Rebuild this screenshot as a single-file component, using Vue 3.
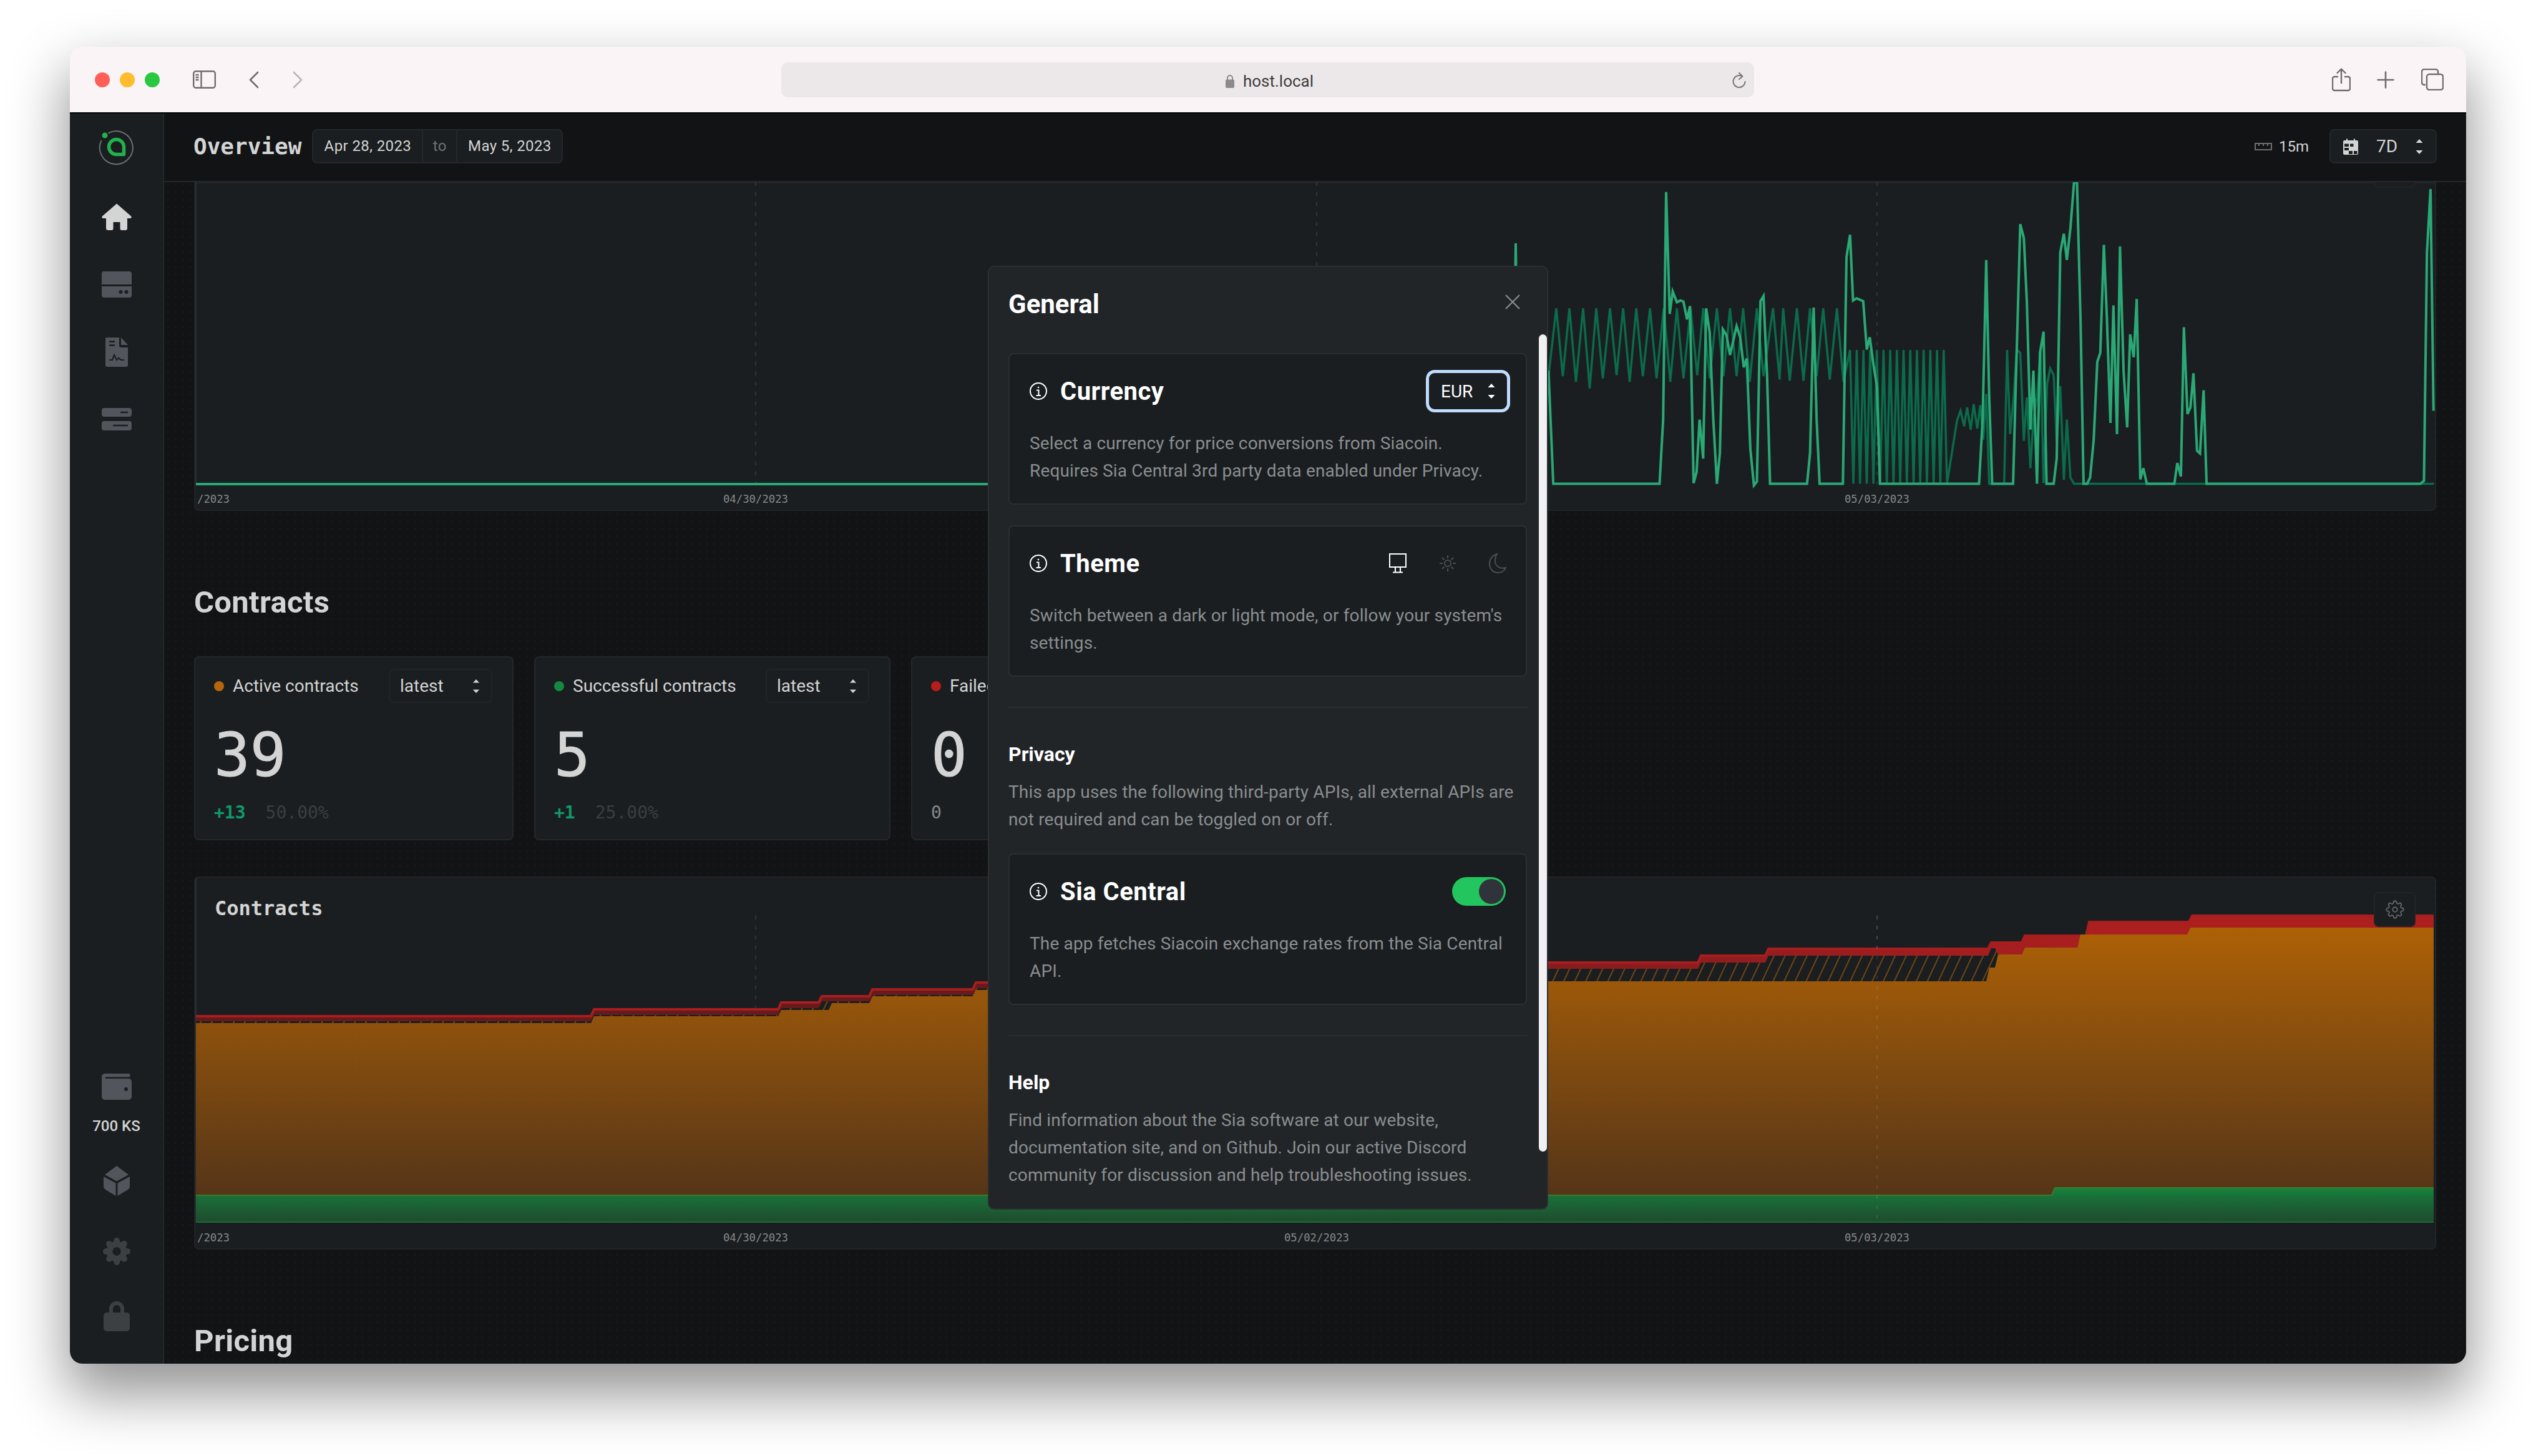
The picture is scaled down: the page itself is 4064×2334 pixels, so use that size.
<template>
  <div class="page">
    <div class="window">
      <div class="titlebar">
        <div class="lights">
          <span class="light red"></span>
          <span class="light amber"></span>
          <span class="light green"></span>
        </div>
        <svg class="tb-sidebar" viewBox="0 0 37 29" fill="none" stroke="#6f6b6d" stroke-width="2.4">
          <rect x="1.2" y="1.2" width="34.6" height="26.6" rx="3.5" />
          <path d="M13.5 1.2v26.6M4.5 7h5M4.5 11h5M4.5 15h5" />
        </svg>
        <svg class="tb-back" viewBox="0 0 16 28" fill="none" stroke="#6f6b6d" stroke-width="2.6" stroke-linecap="round" stroke-linejoin="round"><path d="M14 2 2 14l12 12" /></svg>
        <svg class="tb-forward" viewBox="0 0 16 28" fill="none" stroke="#b9b5b7" stroke-width="2.6" stroke-linecap="round" stroke-linejoin="round"><path d="m2 2 12 12L2 26" /></svg>
        <div class="addressbar">
          <svg class="lock-small" viewBox="0 0 14 23" fill="#8c898b"><path d="M2 10V7a5 5 0 0 1 10 0v3h-2V7a3 3 0 0 0-6 0v3z" /><rect y="9.5" width="14" height="13.5" rx="2" /></svg>
          <span>host.local</span>
          <svg class="reload" viewBox="0 0 24 26" fill="none" stroke="#7a7678" stroke-width="2" stroke-linecap="round"><path d="M17 6.5A9.5 9.5 0 1 0 21.5 15" /><path d="m12 1 5.5 5.5L12 11" stroke-linejoin="round" /></svg>
        </div>
        <div class="tb-actions">
          <svg class="tb-share" viewBox="0 0 30 38" fill="none" stroke="#6f6b6d" stroke-width="2.4" stroke-linecap="round" stroke-linejoin="round"><path d="M9 14H4a3 3 0 0 0-3 3v16a3 3 0 0 0 3 3h22a3 3 0 0 0 3-3V17a3 3 0 0 0-3-3h-5M15 24V2M8.5 8 15 1.5 21.5 8" /></svg>
          <svg class="tb-plus" viewBox="0 0 28 28" fill="none" stroke="#6f6b6d" stroke-width="2.6" stroke-linecap="round"><path d="M14 1.5v25M1.5 14h25" /></svg>
          <svg class="tb-tabs" viewBox="0 0 36 35" fill="none" stroke="#6f6b6d" stroke-width="2.4"><path d="M7 26H5a4 4 0 0 1-4-4V5a4 4 0 0 1 4-4h18a4 4 0 0 1 4 4v3" /><rect x="9" y="9" width="26" height="25" rx="4" /></svg>
        </div>
      </div>

      <div class="app">
        <aside class="sidebar">
          <div class="nav-logo">
            <svg viewBox="0 0 60 60" width="60" height="60" fill="none">
              <path d="M16.5 7.5A26.5 26.5 0 1 1 5.5 19" stroke="#6c7072" stroke-width="2" />
              <circle cx="11" cy="11" r="4.5" fill="#22b14c" />
              <path d="M41.5 41.5H29.5a12 12 0 1 1 12-12Z" stroke="#22b14c" stroke-width="5.5" stroke-linejoin="round" />
            </svg>
          </div>
          <div class="nav-item">
            <svg width="48" height="44" viewBox="0 0 48 44" fill="#d4d4d4"><path d="M24 0.5 47 20.5Q49 24 45 24H41V40Q41 43 38 43H32Q29.500 43 29.500 40V30H18.500V40Q18.500 43 16 43H10Q7 43 7 40V24H3Q-1 24 1 20.500Z" /></svg>
          </div>
          <div class="nav-item">
            <svg width="48" height="42" viewBox="0 0 48 42" fill="#52565c"><path d="M4 0H44A4 4 0 0 1 48 4V21H0V4A4 4 0 0 1 4 0ZM0 24H48V38A4 4 0 0 1 44 42H4A4 4 0 0 1 0 38Z" /><circle cx="30.500" cy="33" r="3" fill="#1a1e20" /><circle cx="39.500" cy="33" r="3" fill="#1a1e20" /></svg>
          </div>
          <div class="nav-item">
            <svg width="36" height="47" viewBox="0 0 36 47" fill="#52565c"><path d="M2 0H22V13A3 3 0 0 0 25 16H36V44A3 3 0 0 1 33 47H3A3 3 0 0 1 0 44V2A2 2 0 0 1 2 0ZM25 0 36 12H25Z" /><path d="M6 6.500H15M6 12.500H15" stroke="#1a1e20" stroke-width="2.500" /><path d="M6 36H11L14 28 18 36 21 33 25 36H30" stroke="#1a1e20" stroke-width="2.200" fill="none" /></svg>
          </div>
          <div class="nav-item">
            <svg width="48" height="36" viewBox="0 0 48 36" fill="#52565c"><rect width="48" height="14" rx="4" /><rect y="21" width="48" height="15" rx="4" /><path d="M30 7H42M18 28H42" stroke="#1a1e20" stroke-width="2.500" /></svg>
          </div>

          <div class="nav-bottom">
            <div class="nav-wallet">
              <svg width="48" height="42" viewBox="0 0 48 42" fill="#52565c"><path d="M5 0H43A2.500 2.500 0 0 1 43 5.500H6V8H43A5 5 0 0 1 48 13V37A5 5 0 0 1 43 42H5A5 5 0 0 1 0 37V5A5 5 0 0 1 5 0Z" /><circle cx="39" cy="25" r="3" fill="#1a1e20" /></svg>
              <span>700 KS</span>
            </div>
            <div class="nav-item nav-item--low nav-item--cube">
              <svg width="42" height="48" viewBox="0 0 42 48" fill="#52565c"><path d="M21 0 40 14 21 24.500 2 14ZM0 17 19.500 27.500V48L3 38Q0 36 0 33ZM42 17V33Q42 36 39 38L22.500 48V27.500Z" /></svg>
            </div>
            <div class="nav-item nav-item--low">
              <svg width="46" height="48" viewBox="0 0 24 24" fill="#3c4043" stroke="#3c4043" stroke-width="1" stroke-linejoin="round"><path :d="gearPath" /><circle cx="12" cy="12" r="3.500" fill="#1a1e20" stroke="none" /></svg>
            </div>
            <div class="nav-item nav-item--low">
              <svg width="42" height="48" viewBox="0 0 42 48" fill="#3c4043"><path d="M9 20V12a12 12 0 0 1 24 0v8h-6v-8a6 6 0 0 0-12 0v8z" /><rect y="18" width="42" height="30" rx="5" /></svg>
            </div>
          </div>
        </aside>

        <main class="main">
          <header class="topbar">
            <h1 class="topbar-title">Overview</h1>
            <div class="range">
              <span class="range-from">Apr 28, 2023</span>
              <span class="range-to">to</span>
              <span class="range-end">May 5, 2023</span>
            </div>
            <div class="topbar-right">
              <svg class="ruler" viewBox="0 0 28 12" fill="none" stroke="#6c6f71" stroke-width="2"><rect x="1" y="1" width="26" height="10" /><path d="M7 1v4M14 1v4M21 1v4" /></svg>
              <span class="interval">15m</span>
              <div class="range-select">
                <svg class="calendar" viewBox="0 0 24 26" fill="#d4d4d4"><path d="M2 3H5V0.500H7V3H17V0.500H19V3H22A2 2 0 0 1 24 5V24A2 2 0 0 1 22 26H2A2 2 0 0 1 0 24V5A2 2 0 0 1 2 3Z" /><path d="M2 8.500H9V13H2ZM11 8.500H16.500V13H11ZM2 15H9V19H2ZM9 20H15V25H9ZM17 20H22.500V25H17Z" fill="#1a1e20" /></svg>
                <span>7D</span>
                <svg class="arrows" viewBox="0 0 12 24" fill="#d4d4d4"><path d="M6 0l5.500 6H.500zM6 24 .500 18H11.500z" /></svg>
              </div>
            </div>
          </header>

          <div class="content">
            <section class="panel panel--top">
              <svg class="chart" viewBox="311 292 3593 527" width="3593" height="527" fill="none">
                <path v-for="x in gridX" :key="x" :d="`M${x} 292V776`" stroke="#3a3e40" stroke-width="1.500" stroke-dasharray="6 10" />
                <path d="M314 292V776" stroke="#2b2f31" stroke-width="2" />
                <path d="M314 776H2424L2429 390L2434 776H2470" stroke="#2aa876" stroke-width="4" />
                <g transform="translate(2470 280) scale(.957 .357)">
                  <polyline :points="darkLine" stroke="#0b6b4b" stroke-width="3.500" vector-effect="non-scaling-stroke" />
                  <polyline :points="lightLine" stroke="#2aa876" stroke-width="4" vector-effect="non-scaling-stroke" />
                </g>
                <text v-for="t in axisTicks" :key="t.x" :x="t.x" y="806" :text-anchor="t.anchor" class="axis">{{ t.label }}</text>
              </svg>
              <div class="panel-gear panel-gear--clipped"></div>
            </section>

            <h2 class="section-title">Contracts</h2>

            <div class="stats">
              <div v-for="card in stats" :key="card.label" class="stat" :style="{ width: card.width + 'px' }">
                <div class="stat-head">
                  <span class="dot" :style="{ background: card.color }"></span>
                  <span class="stat-label">{{ card.label }}</span>
                  <div class="mini-select">
                    <span>latest</span>
                    <svg class="arrows" viewBox="0 0 12 24" fill="#d4d4d4"><path d="M6 0l5.500 6H.500zM6 24 .500 18H11.500z" /></svg>
                  </div>
                </div>
                <div class="stat-value">{{ card.value }}</div>
                <div class="stat-sub">
                  <span v-if="card.diff" class="stat-diff">{{ card.diff }}</span>
                  <span :class="card.diff ? 'stat-pct' : 'stat-zero'">{{ card.pct }}</span>
                </div>
              </div>
            </div>

            <section class="panel panel--contracts">
              <svg class="chart" viewBox="311 1405 3593 598" width="3593" height="598" fill="none">
                <defs>
                  <linearGradient id="orangeFill" gradientUnits="userSpaceOnUse" x1="0" y1="1487" x2="0" y2="1916">
                    <stop offset="0" stop-color="#ad6106" />
                    <stop offset="1" stop-color="#553518" />
                  </linearGradient>
                  <linearGradient id="redFill" gradientUnits="userSpaceOnUse" x1="314" y1="0" x2="3900" y2="0">
                    <stop offset="0" stop-color="#641a1c" />
                    <stop offset=".4" stop-color="#6a1a1c" />
                    <stop offset=".66" stop-color="#8e1c1e" />
                    <stop offset=".86" stop-color="#ac1f1f" />
                  </linearGradient>
                  <linearGradient id="greenFill" gradientUnits="userSpaceOnUse" x1="0" y1="1904" x2="0" y2="1960">
                    <stop offset="0" stop-color="#16843d" />
                    <stop offset=".25" stop-color="#197039" />
                    <stop offset="1" stop-color="#1f4a2e" />
                  </linearGradient>
                  <pattern id="hatch" patternUnits="userSpaceOnUse" width="16" height="16" patternTransform="rotate(25)">
                    <rect width="16" height="16" fill="#1a1e20" />
                    <path d="M8 0v16" stroke="#a05a08" stroke-width="1.300" />
                  </pattern>
                </defs>
                <path v-for="x in gridX" :key="x" :d="`M${x} 1468V1960`" stroke="#3a3e40" stroke-width="1.500" stroke-dasharray="6 10" />
                <path d="M314 1405V1960" stroke="#2b2f31" stroke-width="2" />
                <path :d="redArea" fill="url(#redFill)" />
                <path :d="redEdge" stroke="#a81e1e" stroke-width="4" />
                <path :d="hatchArea" fill="url(#hatch)" />
                <path :d="orangeArea" fill="url(#orangeFill)" />
                <path :d="greenArea" fill="url(#greenFill)" />
                <path :d="greenEdge" stroke="#3f7a2c" stroke-width="2" />
                <path d="M314 1959H3900" stroke="#1a6b38" stroke-width="2" />
                <path d="M3008 1468V1960" stroke="#fff" stroke-opacity=".12" stroke-width="1.500" stroke-dasharray="6 10" />
                <text v-for="t in axisTicks" :key="t.x" :x="t.x" y="1990" :text-anchor="t.anchor" class="axis">{{ t.label }}</text>
              </svg>
              <div class="panel-title">Contracts</div>
              <div class="panel-gear">
                <svg width="30" height="30" viewBox="0 0 24 24" fill="none" stroke="#62666a" stroke-width="1.500"><path :d="gearPath" /><circle cx="12" cy="12" r="3" /></svg>
              </div>
            </section>

            <h2 class="section-title section-title--pricing">Pricing</h2>
          </div>

          <div class="dialog">
            <div class="dialog-head">
              <h3>General</h3>
              <svg class="dialog-close" viewBox="0 0 24 24" fill="none" stroke="#8a8e90" stroke-width="2.200"><path d="M1 1l22 22M23 1 1 23" /></svg>
            </div>

            <div class="setting">
              <div class="setting-row">
                <svg class="info" viewBox="0 0 28 28" fill="none" stroke="#fff" stroke-width="2"><circle cx="14" cy="14" r="13" /><path d="M11 12.500h3.500V21M10.500 21h7.500" /><circle cx="14" cy="8" r="1.300" fill="#fff" stroke="none" /></svg>
                <span class="setting-title">Currency</span>
                <div class="currency-select">
                  <span>EUR</span>
                  <svg class="arrows" viewBox="0 0 12 24" fill="#fff"><path d="M6 0l5.500 6H.500zM6 24 .500 18H11.500z" /></svg>
                </div>
              </div>
              <p class="setting-text">Select a currency for price conversions from Siacoin.<br />Requires Sia Central 3rd party data enabled under Privacy.</p>
            </div>

            <div class="setting setting--gap">
              <div class="setting-row">
                <svg class="info" viewBox="0 0 28 28" fill="none" stroke="#fff" stroke-width="2"><circle cx="14" cy="14" r="13" /><path d="M11 12.500h3.500V21M10.500 21h7.500" /><circle cx="14" cy="8" r="1.300" fill="#fff" stroke="none" /></svg>
                <span class="setting-title">Theme</span>
                <div class="theme-icons">
                  <svg viewBox="0 0 28 32" fill="none" stroke="#fff" stroke-width="2"><rect x="1" y="1" width="26" height="21" /><path d="M10 22v8M18 22v8M6 30.500h16" /></svg>
                  <svg viewBox="0 0 28 32" fill="none" stroke="#4b4f52" stroke-width="2"><circle cx="14" cy="16" r="5" /><path d="M14 3v5M14 24v5M1 16h5M22 16h5M5 7l3.500 3.500M19.500 21.500 23 25M23 7l-3.500 3.500M8.500 21.500 5 25" /></svg>
                  <svg viewBox="0 0 28 32" fill="none" stroke="#4b4f52" stroke-width="2"><path d="M13 1C5 4 1 10 1 17c0 8 6 14 13 14 6 0 11-3 13-8-9 3-18-3-17-12 0-4 1-7 3-10Z" /></svg>
                </div>
              </div>
              <p class="setting-text">Switch between a dark or light mode, or follow your system's<br />settings.</p>
            </div>

            <hr class="dialog-rule" />

            <h4 class="group-title">Privacy</h4>
            <p class="group-text">This app uses the following third-party APIs, all external APIs are<br />not required and can be toggled on or off.</p>

            <div class="setting setting--tight">
              <div class="setting-row">
                <svg class="info" viewBox="0 0 28 28" fill="none" stroke="#fff" stroke-width="2"><circle cx="14" cy="14" r="13" /><path d="M11 12.500h3.500V21M10.500 21h7.500" /><circle cx="14" cy="8" r="1.300" fill="#fff" stroke="none" /></svg>
                <span class="setting-title">Sia Central</span>
                <div class="toggle"><span class="toggle-knob"></span></div>
              </div>
              <p class="setting-text">The app fetches Siacoin exchange rates from the Sia Central<br />API.</p>
            </div>

            <hr class="dialog-rule" />

            <h4 class="group-title">Help</h4>
            <p class="group-text">Find information about the Sia software at our website,<br />documentation site, and on Github. Join our active Discord<br />community for discussion and help troubleshooting issues.</p>

            <div class="dialog-scrollbar"></div>
          </div>
        </main>
      </div>
    </div>
  </div>
</template>

<script setup>
const gearPath =
  "M19.4 15a1.65 1.65 0 0 0 .33 1.82l.06.06a2 2 0 0 1 0 2.83 2 2 0 0 1-2.83 0l-.06-.06a1.65 1.65 0 0 0-1.82-.33 1.65 1.65 0 0 0-1 1.51V21a2 2 0 0 1-2 2 2 2 0 0 1-2-2v-.09A1.65 1.65 0 0 0 9 19.4a1.65 1.65 0 0 0-1.82.33l-.06.06a2 2 0 0 1-2.83 0 2 2 0 0 1 0-2.83l.06-.06a1.65 1.65 0 0 0 .33-1.82 1.65 1.65 0 0 0-1.51-1H3a2 2 0 0 1-2-2 2 2 0 0 1 2-2h.09A1.65 1.65 0 0 0 4.6 9a1.65 1.65 0 0 0-.33-1.82l-.06-.06a2 2 0 0 1 0-2.83 2 2 0 0 1 2.83 0l.06.06a1.65 1.65 0 0 0 1.82.33H9a1.65 1.65 0 0 0 1-1.51V3a2 2 0 0 1 2-2 2 2 0 0 1 2 2v.09a1.65 1.65 0 0 0 1 1.51 1.65 1.65 0 0 0 1.82-.33l.06-.06a2 2 0 0 1 2.83 0 2 2 0 0 1 0 2.83l-.06.06a1.65 1.65 0 0 0-.33 1.82V9a1.65 1.65 0 0 0 1.51 1H21a2 2 0 0 1 2 2 2 2 0 0 1-2 2h-.09a1.65 1.65 0 0 0-1.51 1z";

const gridX = [1211, 2110, 3008];

const axisTicks = [
  { x: 316, label: "/2023", anchor: "start" },
  { x: 1211, label: "04/30/2023", anchor: "middle" },
  { x: 2110, label: "05/02/2023", anchor: "middle" },
  { x: 3008, label: "05/03/2023", anchor: "middle" },
];

const stats = [
  { label: "Active contracts", color: "#b5650a", value: "39", diff: "+13", pct: "50.00%", width: 512 },
  { label: "Successful contracts", color: "#15893f", value: "5", diff: "+1", pct: "25.00%", width: 571 },
  { label: "Failed contracts", color: "#b91c1c", value: "0", diff: "", pct: "0", width: 571 },
];

// storage samples, drawn in a 1500-wide window starting right of the dialog
const lightLine = [
  [12, 880], [20, 1388], [198, 1388], [204, 1100], [209, 78], [215, 625], [220, 525], [227, 573], [233, 565], [238, 570],
  [244, 650], [249, 590], [255, 1385], [260, 1335], [265, 1100], [271, 1275], [276, 600], [282, 710], [288, 1100], [294, 1388],
  [299, 1250], [304, 695], [310, 720], [316, 810], [327, 680], [333, 730], [339, 865], [344, 825], [350, 1230], [356, 1395],
  [361, 1378], [367, 568], [372, 545], [378, 900], [383, 1388], [445, 1388], [450, 1250], [456, 597], [461, 1100], [466, 1388],
  [505, 1388], [511, 370], [517, 270], [522, 565], [528, 555], [539, 568], [545, 785], [550, 730], [556, 850], [562, 950],
  [567, 1388], [733, 1388], [739, 1100], [745, 383], [750, 1000], [755, 1388], [790, 1388], [796, 800], [802, 222], [808, 285],
  [813, 570], [819, 1145], [824, 880], [830, 1388], [835, 800], [841, 705], [846, 1388], [858, 1388], [863, 1275], [869, 350],
  [875, 265], [880, 383], [886, 240], [892, 35], [897, 35], [903, 660], [908, 1388], [914, 1388], [919, 1360], [925, 1190],
  [931, 840], [936, 800], [942, 315], [947, 640], [953, 1115], [958, 587], [964, 1165], [969, 322], [975, 880], [981, 1135],
  [986, 717], [992, 820], [997, 558], [1003, 1368], [1008, 1318], [1014, 1388], [1060, 1388], [1065, 1295], [1071, 1355], [1076, 685],
  [1082, 1075], [1087, 1045], [1092, 892], [1098, 1240], [1103, 1252], [1109, 968], [1114, 1388], [1472, 1388], [1478, 1375], [1483, 350],
  [1489, 65], [1494, 1060],
].join(" ");

const wavePeaks = [25, 47, 70, 92, 115, 137, 159, 182, 205, 227, 250, 271, 294, 316, 338, 361, 388, 405, 428, 450, 472, 495];
const waveDips = [905, 930, 960, 915, 900, 930, 905, 915, 930, 915, 900, 915, 905, 905, 930, 905, 920, 925, 925, 905, 920, 930];
const darkPoints = [[12, 905]];
wavePeaks.forEach((x, i) => {
  darkPoints.push([x, 600], [x + 11, waveDips[i]]);
});
for (let x = 517; x <= 685; x += 11.2) {
  darkPoints.push([x, 787], [x + 5.5, 1388]);
}
darkPoints.push(
  [696, 1105], [702, 1060], [708, 1130], [713, 1045], [719, 1145], [724, 1030], [730, 1140], [735, 1035], [740, 1190], [745, 985],
  [750, 1388], [775, 1388], [780, 787], [785, 1165], [791, 1000], [796, 785], [802, 800], [808, 1195], [813, 1000], [819, 1318],
  [824, 1100], [830, 1000], [836, 790], [841, 1385], [847, 940], [852, 870], [858, 900], [863, 1200], [869, 950], [875, 1370],
  [880, 1100], [886, 1360], [892, 1388], [1495, 1388],
);
const darkLine = darkPoints.join(" ");

const CHART_END = 3900;
const CHART_START = 314;

function stepLine(steps) {
  let d = `M${steps[0][0]} ${steps[0][1]}`;
  for (let i = 1; i < steps.length; i++) {
    d += `H${steps[i][0]}L${steps[i][0] + 5} ${steps[i][1]}`;
  }
  return d + `H${CHART_END}`;
}
const toArea = (steps, bottom) => `${stepLine(steps)}V${bottom}H${CHART_START}Z`;

const redSteps = [
  [314, 1627], [947, 1616], [1247, 1605], [1312, 1595], [1393, 1584], [1559, 1573], [1700, 1562], [2100, 1552], [2400, 1541],
  [2721, 1530], [2829, 1519], [3186, 1509], [3240, 1498], [3343, 1476], [3508, 1466],
];
const hatchSteps = [
  [314, 1637], [947, 1627], [1247, 1616], [1312, 1605], [1393, 1595], [1559, 1584], [1700, 1573], [2100, 1563], [2400, 1553],
  [2721, 1543], [2829, 1532], [3186, 1520], [3197, 1530], [3240, 1519], [3329, 1498], [3505, 1487],
];
const orangeSteps = [
  [314, 1640], [947, 1629], [1247, 1619], [1328, 1608], [1393, 1597], [1559, 1587], [2400, 1573], [3183, 1551], [3197, 1530],
  [3240, 1519], [3329, 1498], [3505, 1487],
];
const greenSteps = [[314, 1916], [3288, 1904]];

const redArea = toArea(redSteps, 1700);
const redEdge = stepLine(redSteps.map(([x, y]) => [x, y + 2]));
const hatchArea = toArea(hatchSteps, 1700);
const orangeArea = toArea(orangeSteps, 1930);
const greenArea = toArea(greenSteps, 1960);
const greenEdge = stepLine(greenSteps);
</script>

<style>
html,
body {
  margin: 0;
  background: #fff;
}
</style>

<style scoped>
.page {
  width: 4064px;
  height: 2334px;
  box-sizing: border-box;
  padding: 75px 112px 0;
  overflow: hidden;
  background: #fff;
  font-family: Roboto, "Noto Sans", sans-serif;
}

.window {
  display: flex;
  flex-direction: column;
  height: 2111px;
  overflow: hidden;
  border-radius: 20px;
  box-shadow: 0 44px 90px 6px rgba(0, 0, 0, 0.42);
}

.titlebar {
  display: flex;
  flex: none;
  align-items: center;
  height: 105px;
  background: #faf4f6;
}

.lights {
  display: flex;
  gap: 16px;
  margin: 0 0 0 40px;
}

.light {
  width: 24px;
  height: 24px;
  border-radius: 50%;
}

.light.red {
  background: #ff5f57;
}

.light.amber {
  background: #febc2e;
}

.light.green {
  background: #28c840;
}

.tb-sidebar {
  width: 37px;
  height: 29px;
  margin-left: 53px;
}

.tb-back {
  width: 16px;
  height: 28px;
  margin-left: 53px;
}

.tb-forward {
  width: 16px;
  height: 28px;
  margin-left: 54px;
}

.addressbar {
  position: relative;
  display: flex;
  align-items: center;
  justify-content: center;
  gap: 14px;
  width: 1559px;
  height: 56px;
  margin-left: 767px;
  padding: 4px 0 0 6px;
  box-sizing: border-box;
  border-radius: 10px;
  background: #ece8ea;
  color: #3e3c3d;
  font-size: 26px;
}

.lock-small {
  width: 14px;
  height: 23px;
}

.reload {
  position: absolute;
  right: 12px;
  top: 16px;
  width: 24px;
  height: 26px;
}

.tb-actions {
  display: flex;
  align-items: center;
  margin-left: 0;
  padding-left: 926px;
  width: 0;
}

.tb-share {
  flex: none;
  width: 30px;
  height: 38px;
}

.tb-plus {
  flex: none;
  width: 28px;
  height: 28px;
  margin-left: 42px;
}

.tb-tabs {
  flex: none;
  width: 36px;
  height: 35px;
  margin-left: 43px;
}

.app {
  display: flex;
  flex: 1;
  min-height: 0;
  border-top: 2px solid #000;
}

.sidebar {
  display: flex;
  flex: none;
  flex-direction: column;
  width: 149px;
  border-right: 2px solid #24282a;
  background: #1a1e20;
}

.nav-logo {
  display: flex;
  align-items: center;
  justify-content: center;
  height: 108px;
  margin-bottom: 4px;
}

.nav-item {
  display: flex;
  align-items: center;
  justify-content: center;
  height: 108px;
}

.nav-bottom {
  display: flex;
  flex-direction: column;
  margin-top: auto;
  padding-bottom: 24px;
}

.nav-wallet {
  display: flex;
  flex-direction: column;
  align-items: center;
  gap: 26px;
  margin-bottom: 20px;
  color: #d4d4d4;
  font-size: 24px;
  font-weight: 500;
  line-height: 32px;
}

.nav-item--low {
  height: 104px;
}

.nav-item--cube {
  margin-bottom: 9px;
}

.main {
  position: relative;
  display: flex;
  flex: 1;
  flex-direction: column;
  min-width: 0;
  background-color: #111315;
  background-image: radial-gradient(#15171a 2px, transparent 2px);
  background-size: 12px 12px;
}

.topbar {
  display: flex;
  flex: none;
  align-items: center;
  gap: 17px;
  height: 105px;
  padding: 0 47px 3px;
  border-bottom: 2px solid #25282a;
  background: #111315;
}

.topbar-title {
  margin: 0;
  color: #d4d4d4;
  font-family: "DejaVu Sans Mono", monospace;
  font-size: 36px;
  font-weight: 700;
  line-height: 44px;
}

.range {
  display: flex;
  height: 55px;
  box-sizing: border-box;
  overflow: hidden;
  border: 2px solid #24282a;
  border-radius: 8px;
  background: #1a1e20;
  color: #d4d4d4;
  font-size: 24px;
  letter-spacing: 0.4px;
  line-height: 51px;
  text-align: center;
}

.range-from {
  width: 174px;
}

.range-to {
  width: 53px;
  border-right: 2px solid #24282a;
  border-left: 2px solid #24282a;
  color: #6c7072;
}

.range-end {
  width: 167px;
}

.topbar-right {
  display: flex;
  align-items: center;
  margin-left: auto;
  color: #d4d4d4;
}

.ruler {
  width: 28px;
  height: 12px;
}

.interval {
  margin: 0 33px 0 11px;
  font-size: 24px;
}

.range-select {
  display: flex;
  align-items: center;
  width: 172px;
  height: 55px;
  box-sizing: border-box;
  padding: 0 20px;
  border: 2px solid #24282a;
  border-radius: 8px;
  background: #1a1e20;
  font-size: 28px;
}

.calendar {
  width: 24px;
  height: 26px;
  margin-right: 29px;
}

.arrows {
  width: 12px;
  height: 24px;
  margin-left: auto;
}

.content {
  flex: 1;
  min-height: 0;
  overflow: hidden;
  padding: 0 48px;
}

.panel {
  position: relative;
  box-sizing: border-box;
  width: 3593px;
  overflow: hidden;
  border-radius: 0 0 8px 8px;
  background: #1a1e20;
  box-shadow: inset 0 0 0 2px #212527;
}

.panel--top {
  height: 527px;
}

.panel--contracts {
  height: 598px;
  margin-top: 58px;
  border-radius: 8px;
}

.chart {
  display: block;
}

.axis {
  fill: #85898b;
  font-family: "DejaVu Sans Mono", monospace;
  font-size: 17.3px;
}

.panel-title {
  position: absolute;
  top: 31px;
  left: 33px;
  color: #d4d4d4;
  font-family: "DejaVu Sans Mono", monospace;
  font-size: 32px;
  font-weight: 700;
  line-height: 40px;
}

.panel-gear {
  position: absolute;
  top: 25px;
  right: 33px;
  display: flex;
  align-items: center;
  justify-content: center;
  width: 67px;
  height: 56px;
  box-sizing: border-box;
  border: 2px solid #212527;
  border-radius: 8px;
  background: #1a1e20;
}

.panel-gear--clipped {
  top: -47px;
}

.section-title {
  margin: 117px 0 0;
  color: #d4d4d4;
  font-size: 49px;
  font-weight: 700;
  letter-spacing: 0.3px;
  line-height: 60px;
}

.section-title--pricing {
  margin-top: 117px;
}

.stats {
  display: flex;
  gap: 33px;
  margin-top: 56px;
}

.stat {
  flex: none;
  height: 295px;
  box-sizing: border-box;
  padding: 18px 32px 0 30px;
  border: 2px solid #24282a;
  border-radius: 8px;
  background: #1a1e20;
}

.stat-head {
  display: flex;
  align-items: center;
  height: 55px;
  color: #d4d4d4;
  font-size: 28px;
}

.dot {
  flex: none;
  width: 16px;
  height: 16px;
  border-radius: 50%;
}

.stat-label {
  margin-left: 14px;
  white-space: nowrap;
}

.mini-select {
  display: flex;
  flex: none;
  align-items: center;
  width: 166px;
  height: 55px;
  box-sizing: border-box;
  margin-left: auto;
  padding: 0 18px 0 16px;
  border: 2px solid #212527;
  border-radius: 8px;
}

.mini-select .arrows {
  height: 22px;
}

.stat-value {
  margin-top: 24px;
  color: #d4d4d4;
  font-family: "DejaVu Sans Mono", monospace;
  font-size: 96px;
  line-height: 120px;
  -webkit-text-stroke: 1px #d4d4d4;
}

.stat-sub {
  display: flex;
  gap: 32px;
  margin-top: 12px;
  font-family: "DejaVu Sans Mono", monospace;
  font-size: 28px;
  line-height: 40px;
}

.stat-diff {
  color: #109868;
  font-weight: 700;
}

.stat-pct {
  color: #3a3e40;
}

.stat-zero {
  color: #85898b;
}

.dialog {
  position: absolute;
  top: 244px;
  left: 1320px;
  width: 898px;
  height: 1513px;
  box-sizing: border-box;
  overflow: hidden;
  padding: 0 31px;
  border: 2px solid #2b2f31;
  border-radius: 10px;
  background: #212527;
  color: #fff;
}

.dialog-head {
  display: flex;
  justify-content: space-between;
  height: 138px;
  padding-top: 34px;
  box-sizing: border-box;
}

.dialog-head h3 {
  margin: 0;
  font-size: 42px;
  font-weight: 700;
  line-height: 52px;
}

.dialog-close {
  width: 24px;
  height: 24px;
  margin: 10px 12px 0 0;
}

.setting {
  box-sizing: border-box;
  width: 831px;
  height: 243px;
  padding: 25px 25px 0 32px;
  border: 2px solid #2b2f31;
  border-radius: 8px;
  background: #1a1e20;
}

.setting--gap {
  margin-top: 33px;
}

.setting--tight {
  margin-top: 32px;
}

.setting-row {
  display: flex;
  align-items: center;
  height: 68px;
}

.info {
  flex: none;
  width: 28px;
  height: 28px;
}

.setting-title {
  margin-left: 21px;
  font-size: 40px;
  font-weight: 700;
  letter-spacing: 0.5px;
}

.setting-text,
.group-text {
  margin: 28px 0 0;
  color: #8a8e90;
  font-size: 28px;
  letter-spacing: 0.15px;
  line-height: 44px;
  white-space: nowrap;
}

.currency-select {
  display: flex;
  align-items: center;
  width: 135px;
  height: 68px;
  box-sizing: border-box;
  margin-left: auto;
  padding: 0 19px;
  border: 5px solid #bfdbfe;
  border-radius: 14px;
  font-size: 28px;
}

.theme-icons {
  display: flex;
  gap: 52px;
  margin-left: auto;
  margin-right: 6px;
}

.theme-icons svg {
  width: 28px;
  height: 32px;
}

.dialog-rule {
  height: 2px;
  margin: 48px 0 0;
  border: 0;
  background: #2a2e30;
}

.group-title {
  margin: 52px 0 0;
  font-size: 32px;
  font-weight: 700;
  line-height: 44px;
}

.group-text {
  margin-top: 17px;
}

.toggle {
  display: flex;
  align-items: center;
  justify-content: flex-end;
  width: 86px;
  height: 46px;
  box-sizing: border-box;
  margin-left: auto;
  margin-right: 7px;
  padding-right: 3px;
  border-radius: 23px;
  background: #22c55e;
}

.toggle-knob {
  width: 40px;
  height: 40px;
  border-radius: 50%;
  background: #30343a;
}

.dialog-scrollbar {
  position: absolute;
  top: 108px;
  right: 0;
  width: 13px;
  height: 1310px;
  border-radius: 7px;
  background: #f0f0f2;
}
</style>
